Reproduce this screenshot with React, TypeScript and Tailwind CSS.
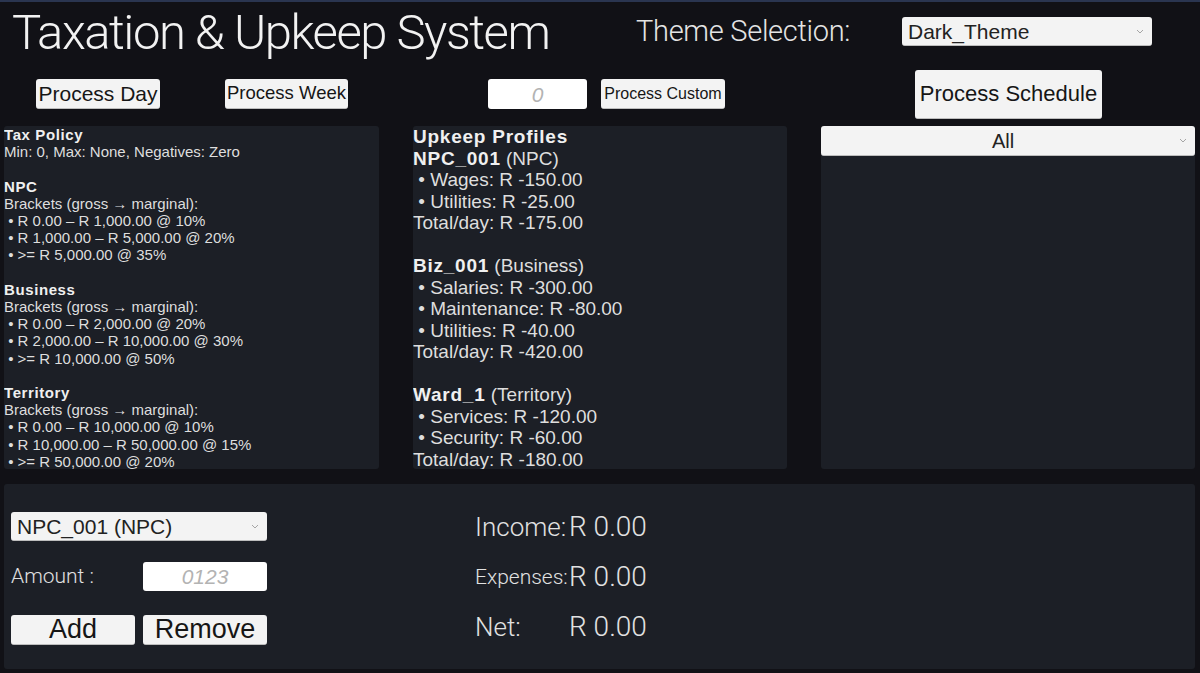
import React from 'react';

const sans = "font-['Liberation_Sans',Arial,sans-serif]";
const light = "font-['Roboto','Liberation_Sans',sans-serif] font-light";

function Chevron() {
  return (
    <svg width="8" height="5" viewBox="0 0 8 5" className="shrink-0">
      <polyline points="1,1 4,4 7,1" fill="none" stroke="#a5a5a5" strokeWidth="1" />
    </svg>
  );
}

function Dropdown({ label, className = '', center = false, textClass = 'text-[21px]' }: { label: string; className?: string; center?: boolean; textClass?: string }) {
  return (
    <div className={`bg-[#f3f3f3] rounded-[3px] border-b border-[#bdbdbd] flex items-center pl-[6px] pr-[8px] ${className}`}>
      <span className={`${sans} ${textClass} text-[#222] leading-none flex-1 ${center ? 'text-center' : ''}`}>{label}</span>
      <Chevron />
    </div>
  );
}

function Btn({ label, className = '', textClass = '' }: { label: string; className?: string; textClass?: string }) {
  return (
    <button className={`bg-[#f3f3f3] rounded-[3px] border-b border-[#bdbdbd] flex items-center justify-center ${sans} text-[#161616] leading-none ${className} ${textClass}`}>
      {label}
    </button>
  );
}

function Input({ placeholder, className = '' }: { placeholder: string; className?: string }) {
  return (
    <div className={`bg-white rounded-[3px] flex items-center justify-center ${sans} italic text-[21px] text-[#b3b3b3] leading-none ${className}`}>
      {placeholder}
    </div>
  );
}

const taxLines: { t: string; b?: boolean }[] = [
  { t: 'Tax Policy', b: true },
  { t: 'Min: 0, Max: None, Negatives: Zero' },
  { t: '' },
  { t: 'NPC', b: true },
  { t: 'Brackets (gross → marginal):' },
  { t: ' • R 0.00 – R 1,000.00 @ 10%' },
  { t: ' • R 1,000.00 – R 5,000.00 @ 20%' },
  { t: ' • >= R 5,000.00 @ 35%' },
  { t: '' },
  { t: 'Business', b: true },
  { t: 'Brackets (gross → marginal):' },
  { t: ' • R 0.00 – R 2,000.00 @ 20%' },
  { t: ' • R 2,000.00 – R 10,000.00 @ 30%' },
  { t: ' • >= R 10,000.00 @ 50%' },
  { t: '' },
  { t: 'Territory', b: true },
  { t: 'Brackets (gross → marginal):' },
  { t: ' • R 0.00 – R 10,000.00 @ 10%' },
  { t: ' • R 10,000.00 – R 50,000.00 @ 15%' },
  { t: ' • >= R 50,000.00 @ 20%' },
];

const upkeepLines: { b?: string; t?: string }[] = [
  { b: 'Upkeep Profiles' },
  { b: 'NPC_001', t: ' (NPC)' },
  { t: ' • Wages: R -150.00' },
  { t: ' • Utilities: R -25.00' },
  { t: 'Total/day: R -175.00' },
  { t: '' },
  { b: 'Biz_001', t: ' (Business)' },
  { t: ' • Salaries: R -300.00' },
  { t: ' • Maintenance: R -80.00' },
  { t: ' • Utilities: R -40.00' },
  { t: 'Total/day: R -420.00' },
  { t: '' },
  { b: 'Ward_1', t: ' (Territory)' },
  { t: ' • Services: R -120.00' },
  { t: ' • Security: R -60.00' },
  { t: 'Total/day: R -180.00' },
];

export default function App() {
  return (
    <div className={`w-[1200px] h-[673px] overflow-hidden bg-[#111116] border-t-2 border-[#2a3550] flex flex-col ${sans}`}>
      {/* header */}
      <div className="h-[67px] flex items-start shrink-0">
        <div className="w-[636px] pl-[12px] mt-[6px]">
          <h1 className={`${light} text-[49px] leading-none tracking-[-0.03em] text-[#f2f2f2] whitespace-nowrap`}>Taxation &amp; Upkeep System</h1>
        </div>
        <div className={`w-[266px] mt-[15px] ${light} text-[29px] leading-none tracking-[-0.01em] text-[#e4e4e4] whitespace-nowrap`}>Theme Selection:</div>
        <Dropdown label="Dark_Theme" className="mt-[15px] w-[250px] h-[29px]" />
      </div>

      {/* process row */}
      <div className="h-[50px] flex items-center shrink-0">
        <Btn label="Process Day" className="ml-[36px] w-[124px] h-[30px]" textClass="text-[21px]" />
        <Btn label="Process Week" className="ml-[65px] w-[123px] h-[30px]" textClass="text-[18.5px]" />
        <Input placeholder="0" className="ml-[140px] w-[99px] h-[30px]" />
        <Btn label="Process Custom" className="ml-[14px] w-[124px] h-[30px]" textClass="text-[16px]" />
        <Btn label="Process Schedule" className="ml-[190px] w-[187px] h-[49px]" textClass="text-[22px]" />
      </div>

      {/* panels */}
      <div className="mt-[7px] h-[343px] flex gap-[34px] pl-[4px] shrink-0">
        <div className="w-[375px] bg-[#1c1f26] rounded-[3px] overflow-hidden text-[15px] leading-[17.2px] text-[#dedede] whitespace-pre">
          {taxLines.map((l, i) => (
            <div key={i} className={l.b ? 'font-bold tracking-[0.04em] text-[#f0f0f0]' : ''}>{l.t || '\u00a0'}</div>
          ))}
        </div>
        <div className="w-[374px] bg-[#1c1f26] rounded-[3px] overflow-hidden text-[19px] leading-[21.5px] text-[#dedede] whitespace-pre">
          {upkeepLines.map((l, i) => (
            <div key={i}>
              {l.b && <span className="font-bold tracking-[0.04em] text-[#f0f0f0]">{l.b}</span>}
              {l.t !== undefined && <span>{l.t || (l.b ? '' : '\u00a0')}</span>}
            </div>
          ))}
        </div>
        <div className="w-[374px] bg-[#1c1f26] rounded-[3px] flex flex-col">
          <Dropdown label="All" center className="h-[30px] w-full" textClass="text-[20px]" />
        </div>
      </div>

      {/* bottom panel */}
      <div className="mt-[15px] ml-[4px] w-[1191px] h-[185px] bg-[#1c1f26] rounded-[3px] flex shrink-0">
        <div className="w-[263px] pl-[7px] pt-[28px] flex flex-col">
          <Dropdown label="NPC_001 (NPC)" className="w-[256px] h-[29px]" />
          <div className="mt-[21px] h-[29px] flex items-center">
            <span className={`${light} text-[21px] leading-none text-[#e0e0e0] w-[132px]`}>Amount :</span>
            <Input placeholder="0123" className="w-[124px] h-[29px]" />
          </div>
          <div className="mt-[24px] flex gap-[8px]">
            <Btn label="Add" className="w-[124px] h-[30px]" textClass="text-[27px]" />
            <Btn label="Remove" className="w-[124px] h-[30px]" textClass="text-[27px]" />
          </div>
        </div>
        <div className="ml-[208px] pt-[18px] flex flex-col">
          {[
            { k: 'Income:', c: 'text-[26px] font-light' },
            { k: 'Expenses:', c: 'text-[21px] font-light' },
            { k: 'Net:', c: 'text-[26px] font-light' },
          ].map((r) => (
            <div key={r.k} className="h-[50px] flex items-center text-[#e2e2e2]">
              <span className={`w-[94px] font-['Roboto','Liberation_Sans',sans-serif] leading-none ${r.c}`}>{r.k}</span>
              <span className={`${light} text-[28px] leading-none`}>R 0.00</span>
            </div>
          ))}
        </div>
      </div>
    </div>
  );
}
